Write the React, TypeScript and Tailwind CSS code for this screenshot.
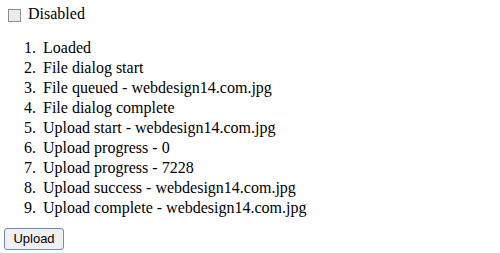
import React from "react";

const items = [
  "Loaded",
  "File dialog start",
  "File queued - webdesign14.com.jpg",
  "File dialog complete",
  "Upload start - webdesign14.com.jpg",
  "Upload progress - 0",
  "Upload progress - 7228",
  "Upload success - webdesign14.com.jpg",
  "Upload complete - webdesign14.com.jpg",
];

export default function App() {
  return (
    <div className="font-[Tinos] w-[500px] h-[253px] overflow-hidden bg-white text-black text-[16px] leading-[20px]">
      <div className="flex items-center pt-[4px] h-[24px]">
        <span className="ml-[8px] mt-[3px] w-[13px] h-[13px] border border-[#8c8c8c] bg-[#ebebeb] shrink-0" />
        <span className="font-[Tinos] ml-[7px]">Disabled</span>
      </div>
      <div className="mt-[14px]">
        {items.map((t, i) => (
          <div key={i} className="font-[Tinos] flex h-[20px]">
            <span className="font-[Tinos] w-[36px] text-right shrink-0">{i + 1}.</span>
            <span className="font-[Tinos] ml-[7px] whitespace-nowrap">{t}</span>
          </div>
        ))}
      </div>
      <div className="pl-[4px] mt-[10px]">
        <button className="font-[Arial] w-[60px] h-[22px] rounded-[3px] border border-[#6e8bb0] bg-[#f0f0f0] text-[13px] leading-[20px] text-black">
          Upload
        </button>
      </div>
    </div>
  );
}
